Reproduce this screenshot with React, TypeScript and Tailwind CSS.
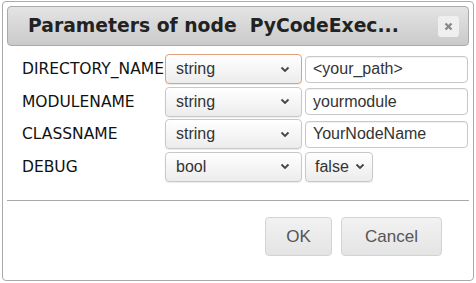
import React from 'react';

const Chevron = () => (
  <svg width="10" height="7" viewBox="0 0 10 7" className="shrink-0">
    <path d="M1.5 1.5 L5 5 L8.5 1.5" fill="none" stroke="#444" strokeWidth="1.8" />
  </svg>
);

interface SelectProps {
  value: string;
  focused?: boolean;
  className?: string;
}

const FakeSelect = ({ value, focused = false, className = '' }: SelectProps) => (
  <div
    className={
      'h-[30px] flex items-center justify-between rounded-[4px] border bg-gradient-to-b from-white to-[#ececec] shadow-[0_1px_1px_rgba(0,0,0,0.08)] ' +
      (focused ? 'border-[#e0a080] ' : 'border-[#c8c8c8] ') +
      className
    }
  >
    <span>{value}</span>
    <Chevron />
  </div>
);

const TextField = ({ value }: { value: string }) => (
  <div className="h-[27px] w-[163px] flex items-center rounded-[4px] border border-[#c8c8c8] bg-white px-[7px] shadow-[inset_0_1px_1px_rgba(0,0,0,0.06)] font-['Liberation_Sans',sans-serif] text-[16px] text-[#333]">
    {value}
  </div>
);

const rows = [
  { name: 'DIRECTORY_NAME', type: 'string', value: '<your_path>', focused: true },
  { name: 'MODULENAME', type: 'string', value: 'yourmodule' },
  { name: 'CLASSNAME', type: 'string', value: 'YourNodeName' },
  { name: 'DEBUG', type: 'bool', value: 'false', bool: true },
];

export default function App() {
  return (
    <div className="w-[476px] h-[283px] bg-white pt-[1px] pl-[2px]">
      <div className="w-[472px] h-[280px] border border-[#aaaaaa] rounded-[4px] p-[4px] flex flex-col">
        {/* title bar */}
        <div className="h-[40px] flex items-center justify-between rounded-[4px] border border-[#aaaaaa] bg-gradient-to-b from-[#e4e4e4] to-[#cacaca] pl-[20px] pr-[9px]">
          <span className="font-['DejaVu_Sans',sans-serif] font-bold text-[18.75px] text-[#222] whitespace-pre">
            Parameters of node  PyCodeExec...
          </span>
          <div className="w-[21px] h-[21px] rounded-[3px] bg-[#efefef] flex items-center justify-center">
            <svg width="9" height="9" viewBox="0 0 9 9">
              <path d="M1.5 1.5 L7.5 7.5 M7.5 1.5 L1.5 7.5" stroke="#8a8a8a" strokeWidth="2.4" />
            </svg>
          </div>
        </div>

        {/* parameters */}
        <div className="flex flex-col gap-[2.5px] pt-[8px] pl-[15px]">
          {rows.map((r) => (
            <div key={r.name} className="flex items-center h-[30px]">
              <div className="w-[143px] pt-[2px] font-['DejaVu_Sans',sans-serif] text-[15.5px] text-[#111] leading-none whitespace-nowrap">
                {r.name}
              </div>
              <FakeSelect
                value={r.type}
                focused={r.focused}
                className="w-[137px] pl-[10px] pr-[11px] font-['Liberation_Sans',sans-serif] text-[16px] text-[#333]"
              />
              <div className="ml-[3px]">
                {r.bool ? (
                  <FakeSelect
                    value={r.value}
                    className="w-[68px] pl-[9px] pr-[7px] gap-[4px] font-['Liberation_Sans',sans-serif] text-[16px] text-[#333]"
                  />
                ) : (
                  <TextField value={r.value} />
                )}
              </div>
            </div>
          ))}
        </div>

        {/* separator & buttons */}
        <div className="mt-auto border-t border-[#aaaaaa] h-[76px] flex items-start justify-end gap-[9px] pt-[16px] pr-[27px]">
          <button className="w-[67px] h-[39px] rounded-[4px] border border-[#d3d3d3] bg-gradient-to-b from-[#f2f2f2] to-[#e4e4e4] font-['Liberation_Sans',sans-serif] text-[17px] text-[#555]">
            OK
          </button>
          <button className="w-[101px] h-[39px] rounded-[4px] border border-[#d3d3d3] bg-gradient-to-b from-[#f2f2f2] to-[#e4e4e4] font-['Liberation_Sans',sans-serif] text-[17px] text-[#555]">
            Cancel
          </button>
        </div>
      </div>
    </div>
  );
}
